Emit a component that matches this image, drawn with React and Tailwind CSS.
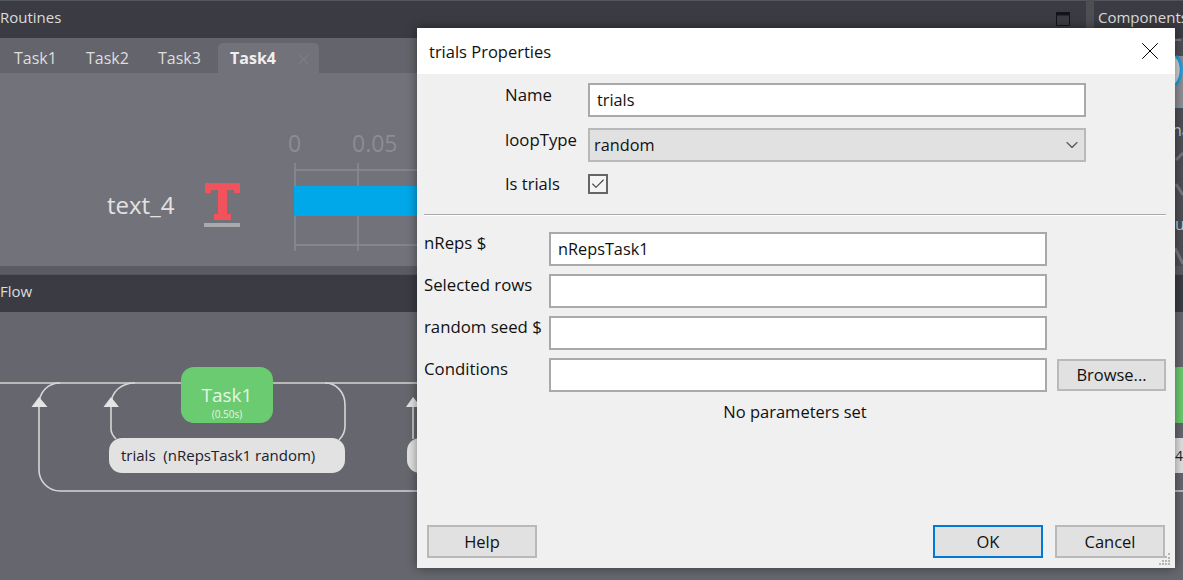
import { X, ChevronDown, Check } from "lucide-react";

const tabs = ["Task1", "Task2", "Task3"];

function PanelHeader({ title, children, className = "" }) {
  return (
    <div className={`h-[38px] shrink-0 flex items-center justify-between bg-[#3b3b43] border-t border-[#55555c] pb-[4px] ${className}`}>
      <span className="text-[15px] text-[#dcdcdc] whitespace-nowrap">{title}</span>
      {children}
    </div>
  );
}

function Timeline() {
  return (
    <svg width="130" height="88" className="shrink-0" viewBox="0 0 130 88">
      <g stroke="#8b8b93" strokeWidth="1.5" fill="none">
        <path d="M2 0V88M65 0V88M2 7H130M2 82H130" />
      </g>
      <rect x="1" y="23" width="129" height="30" fill="#00a8e9" />
    </svg>
  );
}

function RoutinesPanel() {
  return (
    <div className="flex-1 min-w-0 flex flex-col">
      <PanelHeader title="Routines">
        <svg width="14" height="14" viewBox="0 0 14 14" className="mr-[16px] mt-[3px]">
          <path d="M.5 .5h13v13H.5z" fill="none" stroke="#141418" />
          <path d="M0 0h14v3.500H0z" fill="#141418" />
        </svg>
      </PanelHeader>
      <div className="flex-1 flex flex-col bg-[#72727a]">
        <div className="h-[35px] pt-[5px] flex items-stretch bg-[#64646c]">
          {tabs.map((t) => (
            <div key={t} className="w-[72px] pl-[14px] flex items-center text-[16px] text-[#dedede]">
              {t}
            </div>
          ))}
          <div className="w-[101px] ml-[2px] pl-[12px] flex items-center justify-between pr-[7px] bg-[#72727a] rounded-t-[5px] text-[16px] font-bold text-[#efefef]">
            Task4
            <X size={17} strokeWidth={1.2} className="text-[#85858c] mt-[3px]" />
          </div>
        </div>
        <div className="flex-1 flex pl-[107px] pt-[53px]">
          <span className="text-[24px] text-[#e2e2e2] w-[97px] mt-[62px] leading-[34px]">text_4</span>
          <div className="w-[89px] mt-[57px] shrink-0">
            <svg width="37" height="45" viewBox="0 0 37 45">
              <path d="M1 0H36V10H30V7H23V31H27V37H10V31H14V7H7V10H1Z" fill="#f2525c" />
              <rect x="0" y="40" width="36" height="4" fill="#a9a9ae" />
            </svg>
          </div>
          <div className="relative w-[125px] mt-[37px]">
            <span className="absolute -left-[5px] -top-[37px] text-[23px] text-[#8c8c94]">0</span>
            <span className="absolute left-[59px] -top-[37px] text-[23px] text-[#8c8c94]">0.05</span>
            <Timeline />
          </div>
        </div>
      </div>
    </div>
  );
}

function ComponentsPanel() {
  return (
    <div className="w-[89px] shrink-0 flex flex-col overflow-hidden">
      <PanelHeader title="Components" className="pl-[4px]" />
      <div className="flex-1 bg-[#4e4e55] flex justify-end">
        {/* only the last 8px show beside the dialog; y here = page y - 38 */}
        <svg width="8" height="228" viewBox="0 0 8 228" fill="none">
          <path d="M0 2H6" stroke="#8a8a90" strokeWidth="1.5" />
          <rect x="0" y="18" width="8" height="52" fill="#8e8e94" />
          <path d="M0 18C6 24 7 38 0 46Z" fill="#d4d4d6" />
          <path d="M1 18C8 24 8 38 1 47" stroke="#1f9fe0" strokeWidth="3" />
          <path d="M0 69H8" stroke="#6f9ab3" strokeWidth="1.5" />
          <text x="-3" y="98" fontSize="16" fill="#bcd0de" fontFamily="Open Sans, sans-serif">na</text>
          <path d="M8 115L1 122M1 146L8 157" stroke="#77777e" strokeWidth="3" />
          <text x="0" y="192" fontSize="16" fill="#bcd0de" fontFamily="Open Sans, sans-serif">u</text>
          <path d="M0 210L8 226" stroke="#77777e" strokeWidth="3" />
        </svg>
      </div>
    </div>
  );
}

function FlowPanel() {
  return (
    <div className="relative h-[306px] shrink-0 flex flex-col">
      <PanelHeader title="Flow" />
      <div className="relative flex-1 bg-[#66666e] overflow-hidden">
        {/* diagram coords: y=0 is page y=311 */}
        <svg width="1183" height="269" className="absolute -top-[1px] left-0" fill="none" stroke="#d6d6d6" strokeWidth="1.6">
          <path d="M0 72H1183" />
          <path d="M111 94V118C111 122 113 125 116 128M111 94C111 80 122 72 135 72" />
          <path d="M39 94V159C39 171 49 180 60 180H1183M39 94C39 80 49 72 60 72" />
          <path d="M325 72C336 72 345 81 345 94V115C345 120 343 125 339 129" />
          <path d="M413 94V128" />
          <path d="M111 86L103.500 96H119Z" fill="#e4e4e4" stroke="none" />
          <path d="M39 86L31.500 96H47.500Z" fill="#e4e4e4" stroke="none" />
          <path d="M413 86L406 96H421Z" fill="#e4e4e4" stroke="none" />
        </svg>
        <div className="absolute left-[181px] top-[55px] w-[92px] h-[56px] rounded-[13px] bg-[#6bcb70] flex flex-col items-center text-[#e6f5e6]">
          <span className="text-[19px] leading-[24px] mt-[16px]">Task1</span>
          <span className="text-[10px] leading-[10px] mt-[2px]">(0.50s)</span>
        </div>
        <div className="absolute left-[109px] top-[126px] w-[236px] h-[35px] rounded-[13px] bg-[#e2e2e2] pl-[12px] flex items-center text-[15px] text-[#20202c] whitespace-pre">
          {"trials  (nRepsTask1 random)"}
        </div>
        <div className="absolute left-[407px] top-[126px] w-[40px] h-[35px] rounded-[13px] bg-[#e2e2e2]" />
        <div className="absolute left-[1165px] top-[55px] w-[40px] h-[56px] rounded-[13px] bg-[#6bcb70]" />
        <div className="absolute left-[1165px] top-[126px] w-[30px] h-[35px] bg-[#e2e2e2] flex items-center justify-end pr-[12px] text-[14px] text-[#20202c]">
          4
        </div>
      </div>
    </div>
  );
}

function TextBox({ value, className }) {
  return (
    <div className={`h-[34px] bg-white border-2 border-[#a9a9a9] pl-[7px] flex items-center text-[16.300px] text-[#111] ${className}`}>
      {value}
    </div>
  );
}

function DialogButton({ label, primary }) {
  return (
    <button
      className={`w-[110px] h-[33px] pt-[1px] flex items-center justify-center text-[16.500px] text-[#111] bg-[#e1e1e1] border-2 ${
        primary ? "border-[#0078d7]" : "border-[#b9b9b9]"
      }`}
    >
      {label}
    </button>
  );
}

const lowerRows = [
  { label: "nReps $", value: "nRepsTask1" },
  { label: "Selected rows", value: "" },
  { label: "random seed $", value: "" },
  { label: "Conditions", value: "" },
];

function PropertiesDialog() {
  return (
    <div className="absolute left-[417px] top-[28px] w-[758px] h-[540px] flex flex-col bg-[#f0f0f0] shadow-[0_0_10px_rgba(0,0,0,0.45)] text-[#111]">
      <div className="h-[46px] shrink-0 bg-white flex items-center justify-between pl-[12px] pr-[10px]">
        <span className="text-[16.500px] mt-[2px]">trials Properties</span>
        <X size={30} strokeWidth={0.8} className="text-black" />
      </div>

      <div className="pt-[9px] pl-[88px] flex flex-col gap-[11px]">
        <div className="flex">
          <span className="w-[83px] text-[16.800px] leading-[24px]">Name</span>
          <TextBox value="trials" className="w-[498px]" />
        </div>
        <div className="flex">
          <span className="w-[83px] text-[16.800px] leading-[24px] whitespace-nowrap">loopType</span>
          <div className="w-[498px] h-[34px] bg-[#e1e1e1] border-2 border-[#b9b9b9] pl-[4px] pr-[2px] flex items-center justify-between text-[16.300px]">
            random
            <ChevronDown size={20} strokeWidth={1.4} className="text-[#555]" />
          </div>
        </div>
        <div className="flex items-center h-[20px] mt-[1px]">
          <span className="w-[83px] text-[16.500px]">Is trials</span>
          <div className="w-[20px] h-[20px] bg-[#f4f4f4] border-2 border-[#666] flex items-center justify-center">
            <Check size={16} strokeWidth={1.6} className="text-[#444]" />
          </div>
        </div>
      </div>

      <div className="ml-[7px] mr-[9px] mt-[20px] h-[2px] bg-[#a9a9a9] border-b border-white" />

      <div className="pt-[16px] pl-[7px] flex flex-col gap-[8px]">
        {lowerRows.map((row) => (
          <div key={row.label} className="flex">
            <span className="w-[125px] text-[16.800px] leading-[22px] whitespace-nowrap">{row.label}</span>
            <TextBox value={row.value} className="w-[498px]" />
            {row.label === "Conditions" && (
              <button className="ml-[10px] mt-[1px] w-[109px] h-[32px] flex items-center justify-center text-[16.500px] bg-[#e1e1e1] border-2 border-[#b9b9b9]">
                Browse...
              </button>
            )}
          </div>
        ))}
      </div>

      <div className="pl-[132px] w-[624px] text-center text-[16.500px] mt-[8px]">No parameters set</div>

      <div className="mt-auto pb-[10px] pl-[10px] pr-[10px] flex justify-between">
        <DialogButton label="Help" />
        <div className="flex gap-[12px]">
          <DialogButton label="OK" primary />
          <DialogButton label="Cancel" />
        </div>
      </div>

      <svg width="12" height="12" viewBox="0 0 12 12" className="absolute right-[4px] bottom-[3px]" fill="#b5b5b5">
        <path d="M9 0h2v2H9zM6 3h2v2H6zM9 4h2v2H9zM3 7h2v2H3zM6 7h2v2H6zM9 7h2v2H9zM0 10h2v2H0zM3 10h2v2H3zM6 10h2v2H6zM9 10h2v2H9z" />
      </svg>
    </div>
  );
}

export default function App() {
  return (
    <div className="relative w-[1183px] h-[580px] overflow-hidden bg-[#5b5b62] font-['Open_Sans',sans-serif]">
      <div className="h-[266px] flex gap-[8px] bg-[#4e4e55]">
        <RoutinesPanel />
        <ComponentsPanel />
      </div>
      <div className="h-[8px] bg-[#5b5b62]" />
      <FlowPanel />
      <PropertiesDialog />
    </div>
  );
}
